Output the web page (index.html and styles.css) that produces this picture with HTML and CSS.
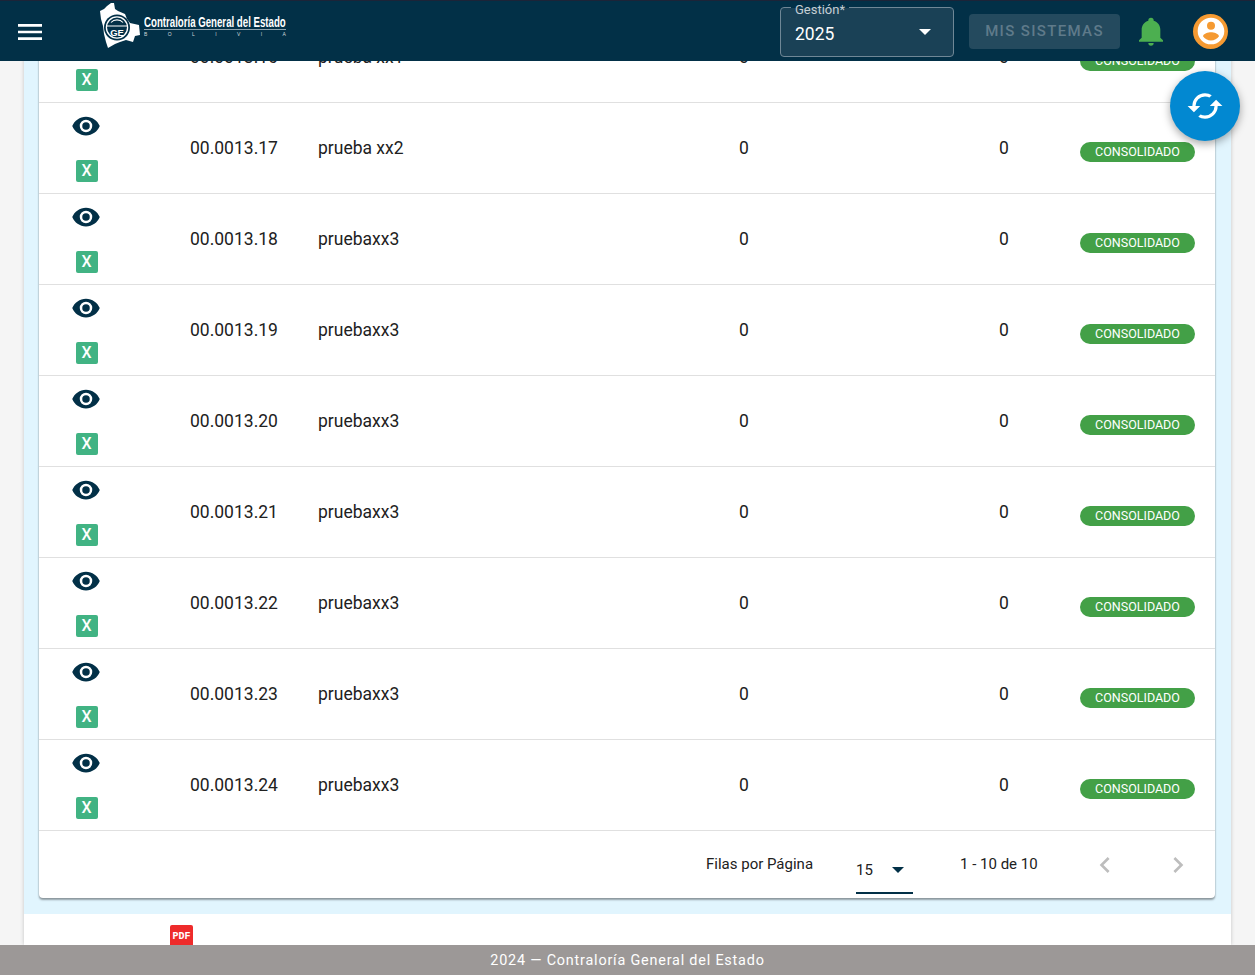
FILE: index.html
```html
<!DOCTYPE html>
<html lang="es">
<head>
    <meta charset="UTF-8">
    <meta name="viewport" content="width=device-width, initial-scale=1.0">
    <title>Contraloría General del Estado</title>
    <link rel="stylesheet" href="styles.css">
</head>
<body>
    <!-- Top bar -->
    <header class="topbar">
        <svg class="menu-icon" viewBox="0 0 24 24"><path d="M3,6H21V8H3V6M3,11H21V13H3V11M3,16H21V18H3V16Z"/></svg>
        <div class="logo">
            <svg class="logo-map" viewBox="0 0 42 47">
                <path fill="#fff" d="M1,9L5,7L8,4L12,1L15,1L16,7L19,9L26,12L28,17L31,21L40,23L41,33L36,34L34,40L27,38L21,40L16,42L9,46L7,40L5,32L4,24L2,17Z"/>
                <circle cx="18" cy="25.5" r="13" fill="#023047"/>
                <circle cx="18" cy="25.5" r="10.6" fill="none" stroke="#fff" stroke-width="1.3"/>
                <path fill="none" stroke="#fff" stroke-width="1.1" d="M7.5,24H28.5M12,20.5C15,17 21,17 24,20.5"/>
                <text x="18" y="33.5" class="logo-mark">GE</text>
            </svg>
            <div class="logo-text">
                <div class="logo-name"><span>Contraloría General del Estado</span></div>
                <div class="logo-country"><span>B</span><span>O</span><span>L</span><span>I</span><span>V</span><span>I</span><span>A</span></div>
            </div>
        </div>
        <div class="year-select">
            <label class="year-label">Gestión*</label>
            <span class="year-value">2025</span>
            <span class="caret caret-white"></span>
        </div>
        <button class="systems-btn" disabled>MIS SISTEMAS</button>
        <svg class="bell-icon" viewBox="0 0 24 24"><path d="M21,19V20H3V19L5,17V11C5,7.9 7.03,5.17 10,4.29C10,4.19 10,4.1 10,4A2,2 0 0,1 12,2A2,2 0 0,1 14,4C14,4.1 14,4.19 14,4.29C16.97,5.17 19,7.9 19,11V17L21,19M14,21A2,2 0 0,1 12,23A2,2 0 0,1 10,21"/></svg>
        <div class="avatar">
            <svg viewBox="0 0 24 24"><path d="M12,19.2C9.5,19.2 7.29,17.92 6,16C6.03,14 10,12.9 12,12.9C14,12.9 17.97,14 18,16C16.71,17.92 14.5,19.2 12,19.2M12,5A3,3 0 0,1 15,8A3,3 0 0,1 12,11A3,3 0 0,1 9,8A3,3 0 0,1 12,5M12,2A10,10 0 0,0 2,12A10,10 0 0,0 12,22A10,10 0 0,0 22,12C22,6.47 17.5,2 12,2Z"/></svg>
        </div>
    </header>

    <div class="viewport">
        <button class="fab">
            <svg viewBox="0 0 24 24"><path d="M12,18A6,6 0 0,1 6,12C6,11 6.25,10.03 6.7,9.2L5.24,7.74C4.46,8.97 4,10.43 4,12A8,8 0 0,0 12,20V23L16,19L12,15M12,4V1L8,5L12,9V6A6,6 0 0,1 18,12C18,13 17.75,13.97 17.3,14.8L18.76,16.26C19.54,15.03 20,13.57 20,12A8,8 0 0,0 12,4Z"/></svg>
        </button>

        <main class="sheet">
            <section class="panel">
                <div class="card">
                    <div class="row">
                        <div class="actions"><svg class="eye" viewBox="0 0 24 24"><path d="M12,9A3,3 0 0,0 9,12A3,3 0 0,0 12,15A3,3 0 0,0 15,12A3,3 0 0,0 12,9M12,17A5,5 0 0,1 7,12A5,5 0 0,1 12,7A5,5 0 0,1 17,12A5,5 0 0,1 12,17M12,4.5C7,4.5 2.73,7.61 1,12C2.73,16.39 7,19.5 12,19.5C17,19.5 21.27,16.39 23,12C21.27,7.61 17,4.5 12,4.5Z"/></svg><span class="excel">X</span></div>
                        <div class="code">00.0013.16</div>
                        <div class="name">prueba xx1</div>
                        <div class="num">0</div>
                        <div class="num">0</div>
                        <div class="status"><span class="badge">CONSOLIDADO</span></div>
                    </div>
                    <div class="row">
                        <div class="actions"><svg class="eye" viewBox="0 0 24 24"><path d="M12,9A3,3 0 0,0 9,12A3,3 0 0,0 12,15A3,3 0 0,0 15,12A3,3 0 0,0 12,9M12,17A5,5 0 0,1 7,12A5,5 0 0,1 12,7A5,5 0 0,1 17,12A5,5 0 0,1 12,17M12,4.5C7,4.5 2.73,7.61 1,12C2.73,16.39 7,19.5 12,19.5C17,19.5 21.27,16.39 23,12C21.27,7.61 17,4.5 12,4.5Z"/></svg><span class="excel">X</span></div>
                        <div class="code">00.0013.17</div>
                        <div class="name">prueba xx2</div>
                        <div class="num">0</div>
                        <div class="num">0</div>
                        <div class="status"><span class="badge">CONSOLIDADO</span></div>
                    </div>
                    <div class="row">
                        <div class="actions"><svg class="eye" viewBox="0 0 24 24"><path d="M12,9A3,3 0 0,0 9,12A3,3 0 0,0 12,15A3,3 0 0,0 15,12A3,3 0 0,0 12,9M12,17A5,5 0 0,1 7,12A5,5 0 0,1 12,7A5,5 0 0,1 17,12A5,5 0 0,1 12,17M12,4.5C7,4.5 2.73,7.61 1,12C2.73,16.39 7,19.5 12,19.5C17,19.5 21.27,16.39 23,12C21.27,7.61 17,4.5 12,4.5Z"/></svg><span class="excel">X</span></div>
                        <div class="code">00.0013.18</div>
                        <div class="name">pruebaxx3</div>
                        <div class="num">0</div>
                        <div class="num">0</div>
                        <div class="status"><span class="badge">CONSOLIDADO</span></div>
                    </div>
                    <div class="row">
                        <div class="actions"><svg class="eye" viewBox="0 0 24 24"><path d="M12,9A3,3 0 0,0 9,12A3,3 0 0,0 12,15A3,3 0 0,0 15,12A3,3 0 0,0 12,9M12,17A5,5 0 0,1 7,12A5,5 0 0,1 12,7A5,5 0 0,1 17,12A5,5 0 0,1 12,17M12,4.5C7,4.5 2.73,7.61 1,12C2.73,16.39 7,19.5 12,19.5C17,19.5 21.27,16.39 23,12C21.27,7.61 17,4.5 12,4.5Z"/></svg><span class="excel">X</span></div>
                        <div class="code">00.0013.19</div>
                        <div class="name">pruebaxx3</div>
                        <div class="num">0</div>
                        <div class="num">0</div>
                        <div class="status"><span class="badge">CONSOLIDADO</span></div>
                    </div>
                    <div class="row">
                        <div class="actions"><svg class="eye" viewBox="0 0 24 24"><path d="M12,9A3,3 0 0,0 9,12A3,3 0 0,0 12,15A3,3 0 0,0 15,12A3,3 0 0,0 12,9M12,17A5,5 0 0,1 7,12A5,5 0 0,1 12,7A5,5 0 0,1 17,12A5,5 0 0,1 12,17M12,4.5C7,4.5 2.73,7.61 1,12C2.73,16.39 7,19.5 12,19.5C17,19.5 21.27,16.39 23,12C21.27,7.61 17,4.5 12,4.5Z"/></svg><span class="excel">X</span></div>
                        <div class="code">00.0013.20</div>
                        <div class="name">pruebaxx3</div>
                        <div class="num">0</div>
                        <div class="num">0</div>
                        <div class="status"><span class="badge">CONSOLIDADO</span></div>
                    </div>
                    <div class="row">
                        <div class="actions"><svg class="eye" viewBox="0 0 24 24"><path d="M12,9A3,3 0 0,0 9,12A3,3 0 0,0 12,15A3,3 0 0,0 15,12A3,3 0 0,0 12,9M12,17A5,5 0 0,1 7,12A5,5 0 0,1 12,7A5,5 0 0,1 17,12A5,5 0 0,1 12,17M12,4.5C7,4.5 2.73,7.61 1,12C2.73,16.39 7,19.5 12,19.5C17,19.5 21.27,16.39 23,12C21.27,7.61 17,4.5 12,4.5Z"/></svg><span class="excel">X</span></div>
                        <div class="code">00.0013.21</div>
                        <div class="name">pruebaxx3</div>
                        <div class="num">0</div>
                        <div class="num">0</div>
                        <div class="status"><span class="badge">CONSOLIDADO</span></div>
                    </div>
                    <div class="row">
                        <div class="actions"><svg class="eye" viewBox="0 0 24 24"><path d="M12,9A3,3 0 0,0 9,12A3,3 0 0,0 12,15A3,3 0 0,0 15,12A3,3 0 0,0 12,9M12,17A5,5 0 0,1 7,12A5,5 0 0,1 12,7A5,5 0 0,1 17,12A5,5 0 0,1 12,17M12,4.5C7,4.5 2.73,7.61 1,12C2.73,16.39 7,19.5 12,19.5C17,19.5 21.27,16.39 23,12C21.27,7.61 17,4.5 12,4.5Z"/></svg><span class="excel">X</span></div>
                        <div class="code">00.0013.22</div>
                        <div class="name">pruebaxx3</div>
                        <div class="num">0</div>
                        <div class="num">0</div>
                        <div class="status"><span class="badge">CONSOLIDADO</span></div>
                    </div>
                    <div class="row">
                        <div class="actions"><svg class="eye" viewBox="0 0 24 24"><path d="M12,9A3,3 0 0,0 9,12A3,3 0 0,0 12,15A3,3 0 0,0 15,12A3,3 0 0,0 12,9M12,17A5,5 0 0,1 7,12A5,5 0 0,1 12,7A5,5 0 0,1 17,12A5,5 0 0,1 12,17M12,4.5C7,4.5 2.73,7.61 1,12C2.73,16.39 7,19.5 12,19.5C17,19.5 21.27,16.39 23,12C21.27,7.61 17,4.5 12,4.5Z"/></svg><span class="excel">X</span></div>
                        <div class="code">00.0013.23</div>
                        <div class="name">pruebaxx3</div>
                        <div class="num">0</div>
                        <div class="num">0</div>
                        <div class="status"><span class="badge">CONSOLIDADO</span></div>
                    </div>
                    <div class="row">
                        <div class="actions"><svg class="eye" viewBox="0 0 24 24"><path d="M12,9A3,3 0 0,0 9,12A3,3 0 0,0 12,15A3,3 0 0,0 15,12A3,3 0 0,0 12,9M12,17A5,5 0 0,1 7,12A5,5 0 0,1 12,7A5,5 0 0,1 17,12A5,5 0 0,1 12,17M12,4.5C7,4.5 2.73,7.61 1,12C2.73,16.39 7,19.5 12,19.5C17,19.5 21.27,16.39 23,12C21.27,7.61 17,4.5 12,4.5Z"/></svg><span class="excel">X</span></div>
                        <div class="code">00.0013.24</div>
                        <div class="name">pruebaxx3</div>
                        <div class="num">0</div>
                        <div class="num">0</div>
                        <div class="status"><span class="badge">CONSOLIDADO</span></div>
                    </div>

                    <!-- Pagination -->
                    <div class="pager">
                        <span class="pager-label">Filas por Página</span>
                        <div class="pager-select">
                            <span>15</span>
                            <span class="caret caret-dark"></span>
                        </div>
                        <span class="pager-range">1 - 10 de 10</span>
                        <svg class="chevron chevron-prev" viewBox="0 0 24 24"><path d="M15.41,16.58L10.83,12L15.41,7.41L14,6L8,12L14,18L15.41,16.58Z"/></svg>
                        <svg class="chevron chevron-next" viewBox="0 0 24 24"><path d="M8.59,16.58L13.17,12L8.59,7.41L10,6L16,12L10,18L8.59,16.58Z"/></svg>
                    </div>
                </div>
            </section>
            <div class="below">
                <span class="pdf">PDF</span>
            </div>
        </main>
    </div>

    <footer class="footer">2024 — Contraloría General del Estado</footer>
</body>
</html>
```

FILE: styles.css
```css
* {
    box-sizing: border-box;
}

body {
    font-family: Roboto, Arial, sans-serif;
    margin: 0;
    height: 975px;
    display: flex;
    flex-direction: column;
    overflow: hidden;
    background-color: #f5f5f5;
    color: #212121;
}

/* Top bar */
.topbar {
    height: 61px;
    flex: none;
    display: flex;
    align-items: center;
    background-color: #023047;
    border-top: 1px solid #1c2438;
    position: relative;
    z-index: 2;
}

.menu-icon {
    width: 32px;
    height: 32px;
    flex: none;
    margin: 1px 0 0 14px;
    fill: #fff;
}

.logo {
    display: flex;
    align-items: flex-start;
    flex: none;
    width: 681px;
    height: 47px;
    margin: -11px 0 0 53px;
}

.logo-map {
    width: 42px;
    height: 47px;
    flex: none;
}

.logo-mark {
    font-family: "Liberation Sans", Arial, sans-serif;
    font-size: 9.5px;
    font-weight: 700;
    fill: #fff;
    text-anchor: middle;
}

.logo-text {
    width: 142px;
    margin: 13px 0 0 3px;
    color: #fff;
}

.logo-name {
    height: 15px;
    font-family: "Liberation Sans", Arial, sans-serif;
    font-size: 14px;
    font-weight: 700;
    line-height: 14px;
    white-space: nowrap;
    border-bottom: 1px solid #8fa3ae;
}

.logo-name span {
    display: inline-block;
    transform: scaleX(0.69);
    transform-origin: left center;
}

.logo-country {
    display: flex;
    justify-content: space-between;
    margin-top: 1px;
    font-family: "Liberation Sans", Arial, sans-serif;
    font-size: 5px;
    line-height: 6px;
    color: #cfd8dc;
}

.year-select {
    width: 174px;
    height: 50px;
    flex: none;
    margin-top: 1px;
    padding: 0 22px 0 14px;
    display: flex;
    align-items: center;
    justify-content: space-between;
    background-color: #1a4156;
    border: 1px solid #6f8796;
    border-radius: 4px;
    position: relative;
}

.year-label {
    position: absolute;
    top: -6px;
    left: 10px;
    padding: 0 4px;
    font-size: 13px;
    line-height: 15px;
    color: #c5ced4;
    background: linear-gradient(#023047 6px, #1a4156 6px);
}

.year-value {
    font-size: 17.5px;
    color: #fff;
    margin-top: 4px;
}

.caret {
    width: 0;
    height: 0;
    border-left: 6.5px solid transparent;
    border-right: 6.5px solid transparent;
}

.caret-white {
    border-top: 6.5px solid #fff;
}

.caret-dark {
    border-top: 6.5px solid #023047;
}

.systems-btn {
    width: 151px;
    height: 35px;
    flex: none;
    margin-left: 15px;
    border: none;
    border-radius: 4px;
    background-color: #244a5e;
    color: #5f7a8a;
    font-family: Roboto, Arial, sans-serif;
    font-size: 15px;
    font-weight: 500;
    letter-spacing: 1.35px;
}

.bell-icon {
    width: 32px;
    height: 32px;
    flex: none;
    margin-left: 15px;
    fill: #4caf50;
}

.avatar {
    width: 35px;
    height: 35px;
    flex: none;
    margin-left: 26px;
    border-radius: 50%;
    background-color: #f59a32;
    display: flex;
    align-items: center;
    justify-content: center;
}

.avatar svg {
    width: 32px;
    height: 32px;
    fill: #fff;
}

/* Scrolled page area */
.viewport {
    flex: 1;
    overflow: hidden;
    position: relative;
}

.fab {
    position: absolute;
    top: 10px;
    left: 1170px;
    width: 70px;
    height: 70px;
    border: none;
    padding: 0;
    border-radius: 50%;
    background-color: #0288d1;
    box-shadow: 0 3px 8px rgba(0, 0, 0, 0.35);
    display: flex;
    align-items: center;
    justify-content: center;
    z-index: 1;
}

.fab svg {
    width: 38px;
    height: 38px;
    fill: #fff;
    transform: rotate(90deg);
}

.sheet {
    width: 1207px;
    margin: -49px 0 0 24px;
    background-color: #fff;
    box-shadow: 0 0 4px rgba(0, 0, 0, 0.2);
}

.panel {
    padding: 0 16px 16px 15px;
    background-color: #e1f5fe;
}

.card {
    background: white;
    border-radius: 0 0 4px 4px;
    box-shadow: 0 2px 2px rgba(0, 0, 0, 0.35), 0 0 2px rgba(0, 0, 0, 0.2);
}

.row {
    height: 91px;
    display: grid;
    grid-template-columns: 95px 184px 242px 368px 152px 135px;
    align-items: center;
    border-bottom: 1px solid #e0e0e0;
    font-size: 17.5px;
}

.actions {
    height: 90px;
    padding-top: 8px;
    display: flex;
    flex-direction: column;
    align-items: center;
    gap: 19px;
}

.eye {
    width: 30px;
    height: 30px;
    flex: none;
    margin-left: -1px;
    fill: #023047;
}

.excel {
    width: 22px;
    height: 22px;
    flex: none;
    border-radius: 2px;
    background-color: #41b383;
    color: #fff;
    font-size: 16px;
    font-weight: 500;
    line-height: 22px;
    text-align: center;
}

.code {
    padding-left: 56px;
}

.num {
    text-align: center;
}

.badge {
    display: block;
    width: 115px;
    height: 20px;
    margin-top: 8px;
    border-radius: 10px;
    background-color: #43a047;
    color: #fff;
    font-size: 12.5px;
    line-height: 20px;
    text-align: center;
}

/* Pagination */
.pager {
    height: 67px;
    display: flex;
    align-items: flex-start;
    font-size: 15px;
}

.pager-label {
    margin: 24px 0 0 667px;
}

.pager-select {
    width: 57px;
    height: 41px;
    flex: none;
    margin: 22px 0 0 43px;
    padding: 0 9px 5px 0;
    display: flex;
    justify-content: space-between;
    align-items: center;
    border-bottom: 2px solid #023047;
}

.pager-range {
    margin: 24px 0 0 47px;
}

.chevron {
    width: 32px;
    height: 32px;
    flex: none;
    margin-top: 18px;
    fill: #bdbdbd;
}

.chevron-prev {
    margin-left: 51px;
}

.chevron-next {
    margin-left: 41px;
}

/* Below the table */
.below {
    height: 31px;
    padding: 11px 0 0 146px;
    overflow: hidden;
}

.pdf {
    display: block;
    width: 23px;
    height: 30px;
    border-radius: 2px;
    background-color: #ee2b2b;
    color: #fff;
    font-family: "Liberation Mono", monospace;
    font-size: 10px;
    font-weight: 700;
    line-height: 23px;
    text-align: center;
}

.footer {
    height: 30px;
    flex: none;
    background-color: #9c9897;
    color: #fff;
    font-size: 14.4px;
    letter-spacing: 0.8px;
    line-height: 31px;
    text-align: center;
    position: relative;
    z-index: 2;
}
```
